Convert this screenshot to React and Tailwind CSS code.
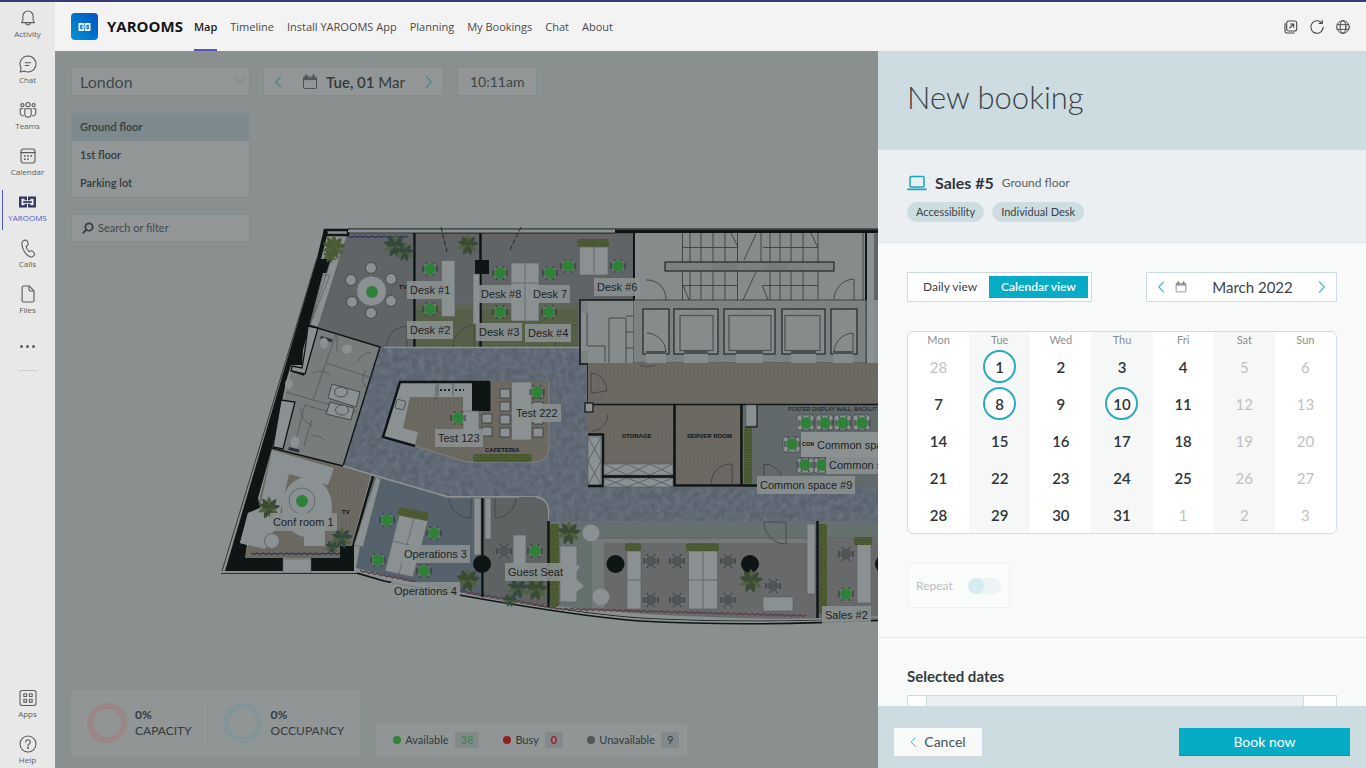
import React from "react";

const GREEN = "#2f8039";
const GREY = "#505456";
const WHITE = "#8b9092";
const INK = "#0f1415";

/* ---------- icons ---------- */

function Icon({ children, className = "size-5", vb = "0 0 20 20", sw = 1.1 }) {
  return (
    <svg viewBox={vb} className={className} fill="none" stroke="currentColor" strokeWidth={sw} strokeLinecap="round" strokeLinejoin="round" aria-hidden="true">
      {children}
    </svg>
  );
}

const BellIcon = () => (
  <Icon>
    <path d="M3.6 14.6h12.8l-1.3-3V8.1a5.1 5.1 0 0 0-10.2 0v3.5z" />
    <path d="M7.8 14.8a2.2 2.2 0 0 0 4.4 0" />
  </Icon>
);
const ChatIcon = () => (
  <Icon>
    <path d="M10 2a8 8 0 1 1-3.7 15.1L2.2 18l.9-4A8 8 0 0 1 10 2z" />
    <path d="M7.3 8.7h5.4M7.3 11.5h3.4" />
  </Icon>
);
const TeamsIcon = () => (
  <Icon>
    <circle cx="10" cy="4.6" r="2.1" />
    <circle cx="4.4" cy="5.2" r="1.6" />
    <circle cx="15.6" cy="5.2" r="1.6" />
    <path d="M6.8 8.7h6.4v5.2a3.2 3.2 0 0 1-6.4 0z" />
    <path d="M4.9 8.7H2.2v4.4a2.8 2.8 0 0 0 3.2 2.7M15.1 8.7h2.7v4.4a2.8 2.8 0 0 1-3.2 2.7" />
  </Icon>
);
const CalendarIcon = () => (
  <Icon>
    <rect x="3" y="3" width="14" height="14" rx="2.4" />
    <path d="M3 6.6h14" />
    <g fill="currentColor" stroke="none">
      <circle cx="10" cy="10" r=".9" />
      <circle cx="13.2" cy="10" r=".9" />
      <circle cx="6.9" cy="10" r=".9" />
      <circle cx="6.9" cy="13.2" r=".9" />
      <circle cx="10" cy="13.2" r=".9" />
    </g>
  </Icon>
);
const LinkMark = ({ className }) => (
  <svg viewBox="0 0 18 12" className={className} fill="none" stroke="currentColor" aria-hidden="true">
    <path strokeWidth="2.5" d="M7.200 4.200V1.300H1.300v9.400h5.900V7.800M10.800 4.200V1.300h5.900v9.400h-5.900V7.800" />
    <path strokeWidth="1.800" d="M4.400 6h9.200" />
  </svg>
);
const PhoneIcon = () => (
  <Icon>
    <path d="M5.9 2.5l1.5-.4c.8-.2 1.500.2 1.800.9l.9 2.100c.3.700.1 1.500-.4 2L8.200 8.500c.2 1.700 1.300 3.700 2.900 5l1.900-.6c.7-.2 1.400 0 1.900.6l1.300 1.800c.4.600.4 1.400-.1 2l-.9.900c-.9.900-2.200 1.100-3.200.6C7.300 16.600 4.200 10.900 3.900 6c-.1-1.600.700-3.100 2-3.500z" />
  </Icon>
);
const FileIcon = () => (
  <Icon>
    <path d="M5.600 2h5.600l4.800 4.800v9.700a1.500 1.500 0 0 1-1.500 1.500H5.600a1.500 1.500 0 0 1-1.500-1.500v-13A1.500 1.500 0 0 1 5.600 2z" />
    <path d="M11 2.200v3.600A1.200 1.200 0 0 0 12.200 7h3.600" />
  </Icon>
);
const AppsIcon = () => (
  <Icon>
    <rect x="2" y="2.500" width="16" height="15" rx="2.200" />
    <rect x="5.800" y="5.700" width="2.800" height="2.800" />
    <rect x="11.400" y="5.700" width="2.800" height="2.800" />
    <rect x="5.800" y="11.300" width="2.800" height="2.800" />
    <rect x="11.400" y="11.300" width="2.800" height="2.800" />
  </Icon>
);
const HelpIcon = () => (
  <Icon>
    <circle cx="10" cy="10" r="8" />
    <path d="M7.700 8a2.300 2.300 0 1 1 3.500 2c-.8.500-1.200 1-1.200 1.900" />
    <circle cx="10" cy="14" r=".5" fill="currentColor" />
  </Icon>
);
const Left = ({ className }) => (
  <Icon vb="0 0 8 14" className={className} sw={1.4}><path d="M7 1L1.500 7 7 13" /></Icon>
);
const Right = ({ className }) => (
  <Icon vb="0 0 8 14" className={className} sw={1.4}><path d="M1 1l5.500 6L1 13" /></Icon>
);
const DateIcon = ({ className }) => (
  <Icon vb="0 0 16 16" className={className} sw={1}>
    <rect x="1.500" y="3" width="13" height="11.500" rx="1" />
    <path d="M1.500 5.600h13M2 4.400h12" />
    <path d="M4.500 1.200v2.600M11.500 1.200v2.600" strokeWidth="2" />
  </Icon>
);

/* ---------- app rail ---------- */

const RAIL = [
  ["Activity", BellIcon],
  ["Chat", ChatIcon],
  ["Teams", TeamsIcon],
  ["Calendar", CalendarIcon],
  ["YAROOMS", () => <LinkMark className="h-5 w-[17px] py-1" />],
  ["Calls", PhoneIcon],
  ["Files", FileIcon],
];

function RailItem({ label, Glyph, active, pad = "pt-1.5" }) {
  return (
    <a
      href="#"
      className={
        "relative flex h-[46px] flex-col items-center text-[8px] leading-3 " + pad + " " +
        (active ? "text-[#5558c0]" : "text-[#5c5c5c]")
      }
    >
      {active && <span className="absolute left-0.5 top-1 h-10 w-px bg-[#5558c0]" />}
      <span className={active ? "text-[#33345f]" : ""}><Glyph /></span>
      <span>{label}</span>
    </a>
  );
}

function Rail() {
  return (
    <nav aria-label="Apps" className="flex w-[55px] shrink-0 flex-col bg-[#e8e8e8]">
      {RAIL.map(([label, Glyph]) => (
        <RailItem key={label} label={label} Glyph={Glyph} active={label === "YAROOMS"} />
      ))}
      <button type="button" aria-label="More apps" className="mx-auto mt-3.5 flex h-4 items-center gap-[3px] text-[#5c5c5c]">
        <i className="size-[3px] rounded-full bg-current" />
        <i className="size-[3px] rounded-full bg-current" />
        <i className="size-[3px] rounded-full bg-current" />
      </button>
      <div className="mx-auto mt-4 w-5 border-t border-[#cfcfcf]" />
      <div className="mt-auto">
        <RailItem label="Apps" Glyph={AppsIcon} pad="pt-3" />
        <RailItem label="Help" Glyph={HelpIcon} pad="pt-3" />
      </div>
    </nav>
  );
}

/* ---------- header ---------- */

const TABS = ["Map", "Timeline", "Install YAROOMS App", "Planning", "My Bookings", "Chat", "About"];

function Header() {
  return (
    <header className="flex h-[49px] shrink-0 items-center bg-[#f3f3f3] pl-4 pr-[15px]">
      <div className="flex size-[27px] items-center justify-center rounded bg-linear-to-tr from-[#0a93cf] to-[#0b4fc4] text-white">
        <LinkMark className="h-2 w-[13px]" />
      </div>
      <h1 className="ml-[9px] text-[15px] font-bold text-[#161616]">YAROOMS</h1>
      <nav aria-label="Sections" className="ml-[11px] flex h-full gap-[13px] text-[11px] text-[#4a4a4a]">
        {TABS.map((t) => (
          <a
            key={t}
            href="#"
            className={
              "flex h-full items-center border-b-2 pt-1 " +
              (t === "Map" ? "border-[#5558b5] font-semibold text-[#1d1d1d]" : "border-transparent")
            }
          >
            {t}
          </a>
        ))}
      </nav>
      <div className="ml-auto flex gap-2.5 text-[#484848]">
        <button type="button" aria-label="Open in a new window">
          <Icon className="size-4" vb="0 0 16 16">
            <rect x="3.700" y="2" width="10" height="10" rx="2" />
            <path d="M2 4.500v7.300A2.200 2.200 0 0 0 4.200 14h7M6.700 9l4-4M7.500 5h3.200v3.200" />
          </Icon>
        </button>
        <button type="button" aria-label="Refresh">
          <Icon className="size-4" vb="0 0 16 16">
            <path d="M14.200 8A6.200 6.200 0 1 1 11.500 2.900l1.600 1.300M13.300 1.200v3.200h-3.100" />
          </Icon>
        </button>
        <button type="button" aria-label="Language">
          <Icon className="size-4" vb="0 0 16 16" sw={1}>
            <circle cx="8" cy="8" r="6.300" />
            <ellipse cx="8" cy="8" rx="2.900" ry="6.300" />
            <path d="M2.300 5.700h11.400M2.300 10.300h11.400" />
          </Icon>
        </button>
      </div>
    </header>
  );
}

/* ---------- floor plan ---------- */

const Seat = ({ x, y, c = GREEN }) => (
  <g>
    <rect x={x - 5.5} y={y - 5.5} width="11" height="11" rx="3" fill="#7c8182" />
    <path d={`M${x - 7} ${y - 3}v6M${x + 7} ${y - 3}v6M${x - 4} ${y - 7}l1 2M${x + 4} ${y - 7}l-1 2M${x - 4} ${y + 7}l1-2M${x + 4} ${y + 7}l-1-2`} stroke="#2c3233" strokeWidth="1" />
    <circle cx={x} cy={y} r="5.800" fill={c} />
  </g>
);

const Plant = ({ x, y, s = 1, c = "#3a4a35" }) => (
  <g transform={`translate(${x} ${y}) scale(${s})`}>
    {[0, 40, 80, 125, 165, 205, 250, 290, 325].map((a, i) => (
      <path key={a} transform={`rotate(${a})`} d="M0 0C-3-3-3.500-8 0-12C3.500-8 3-3 0 0z" fill={i % 3 ? c : "#50603f"} />
    ))}
  </g>
);

const Box = ({ x, y, w, h, f = WHITE }) => (
  <rect x={x} y={y} width={w} height={h} fill={f} stroke="#595e60" strokeWidth=".6" />
);

const Hedge = ({ x, y, w, h }) => <rect x={x} y={y} width={w} height={h} rx="2" fill="url(#hedge)" />;

const Stool = ({ x, y }) => (
  <g>
    <circle cx={x} cy={y} r="6" fill="#4a4f50" />
    <circle cx={x} cy={y} r="5" fill={WHITE} />
  </g>
);

const GREEN_SEATS = [
  [430, 269], [430, 309], [500, 273], [500, 312], [550, 273], [549, 312], [568, 266], [618, 266],
  [537, 392], [458, 418], [387, 520], [434, 533], [378, 560], [424, 571], [535, 551],
  [806, 423], [825, 423], [843, 423], [862, 423], [792, 444], [805, 465], [822, 465], [846, 594],
];
const GREY_SEATS = [
  [504, 551], [651, 561], [651, 600], [677, 561], [677, 600], [728, 561], [728, 600], [773, 586], [846, 554],
];

function zigzag(x1, y1, x2, y2) {
  const n = Math.round(Math.hypot(x2 - x1, y2 - y1) / 3);
  let d = `M${x1} ${y1}`;
  for (let i = 1; i <= n; i++) {
    d += `L${(x1 + ((x2 - x1) * i) / n).toFixed(1)} ${(y1 + ((y2 - y1) * i) / n + (i % 2 ? 1.6 : 0)).toFixed(1)}`;
  }
  return d;
}

function FloorDrawing() {
  return (
    <svg viewBox="215 220 670 410" className="h-[410px] w-[670px]" aria-hidden="true">
      <defs>
        <pattern id="hedge" width="5" height="5" patternUnits="userSpaceOnUse">
          <rect width="5" height="5" fill="#44522d" />
          <path d="M0 1l2 1M3 0l1 2M1 4l2-1M4 3l1 2" stroke="#5c6b3c" strokeWidth="1" />
        </pattern>
        <pattern id="hatch" width="3" height="3" patternUnits="userSpaceOnUse">
          <rect width="3" height="3" fill="#848989" />
          <path d="M0 3L3 0" stroke="#54595a" strokeWidth=".5" />
        </pattern>
        <pattern id="wood" width="8" height="30" patternUnits="userSpaceOnUse">
          <rect width="8" height="30" fill="#6c6862" />
          <path d="M2 0v18M6 9v21" stroke="#67635d" strokeWidth="1" />
        </pattern>
        <filter id="grain" x="0" y="0" width="100%" height="100%" colorInterpolationFilters="sRGB">
          <feTurbulence type="fractalNoise" baseFrequency=".16" numOctaves="3" seed="4" />
          <feColorMatrix values="0 0 0 0 .5  0 0 0 0 .54  0 0 0 0 .6  .8 0 0 0 -.22" />
          <feComposite in2="SourceGraphic" operator="in" result="n" />
          <feMerge><feMergeNode in="SourceGraphic" /><feMergeNode in="n" /></feMerge>
        </filter>
      </defs>

      {/* floors */}
      <g filter="url(#grain)">
        <path d="M380 347H588V487H885V521H549V510Q547 496 535 496H448L343 466z" fill="#59626d" />
      </g>
      <path d="M347 234H414V347H380L318 327z" fill="#606467" />
      <path d="M416 233H634V300H580V347H416z" fill="#606467" />
      <path d="M416 303H578V347H416z" fill="#566048" />
      <path d="M416 303H578V310H416z" fill="#5d6556" />
      <path d="M318 327L380 347 343 466 272 448 291 372H305z" fill="#787c7d" />
      <path d="M343 466L371 475 348 558H245L272 448z" fill="url(#wood)" />
      <path d="M373 476L448 497H482V597L420 584 356 568z" fill="#56626b" />
      <path d="M484 497H535Q548 498 548 510V606L484 597z" fill="#5e6263" />
      <path d="M549 521H885V616Q800 620 740 618Q640 616 549 605z" fill="#67696a" />
      <path d="M549 521H817V537H549zM819 521H885V537H819z" fill="#64716f" />
      <path d="M560 537H592V610L560 606z" fill="#64716f" />
      <path d="M592 539H817V543H604V608H592z" fill="#74797a" />

      {/* outer shell */}
      <path d="M325 230H348V235H325z" fill={WHITE} stroke={INK} strokeWidth="2.500" />
      <path d="M348 229H878M348 233H615" stroke={INK} strokeWidth="1.200" />
      <path d="M348 231H615" stroke={WHITE} strokeWidth="2.500" />
      <path d="M615 231.500H885" stroke={INK} strokeWidth="3.500" />
      <path d="M324 229L328 232 321 259H332L330 273H323L303 350 302 365H291L287 378 272 448 258 498 260 508 248 513 240 543 247 545 245 558H283V571H225L317 258z" fill={INK} />
      <path d="M317 258L222 571" stroke="#33393a" strokeWidth="1" />
      <path d="M311 558H340V546H354V571H311z" fill={INK} />
      <Box x={283} y={559} w={28} h={14} />
      <path d="M221 573.500H357L384 581Q560 612 640 618Q750 624 885 618" fill="none" stroke="#2a3031" strokeWidth="1" />
      <path d="M356 570L386 580Q560 614 640 620Q750 626 885 619" fill="none" stroke={WHITE} strokeWidth="2" />
      <path d="M357 573L384 581Q560 615 640 621Q750 627 885 620" fill="none" stroke={INK} strokeWidth="1.600" />
      <path d={zigzag(348, 236, 408, 236)} fill="none" stroke="#2c375a" strokeWidth="1.300" />
      <path d={zigzag(251, 553, 340, 553)} fill="none" stroke="#2c375a" strokeWidth="1.300" />
      <path d={zigzag(752, 480, 878, 480)} fill="none" stroke="#2c375a" strokeWidth="1.300" />
      <path d={zigzag(360, 570, 416, 581)} fill="none" stroke="#583e4b" strokeWidth="1.300" />
      <path d={zigzag(460, 590, 560, 608)} fill="none" stroke="#583e4b" strokeWidth="1.300" />
      <path d={zigzag(560, 608, 806, 615)} fill="none" stroke="#583e4b" strokeWidth="1.300" />
      <path d={zigzag(416, 236, 615, 236)} fill="none" stroke="#7d5c56" strokeWidth=".8" />

      {/* left side furniture */}
      <path d="M338 259L331 259 310 325 318 327 344 245z M323 275L330 275 310 325z" fill={WHITE} stroke="#4d5253" strokeWidth=".6" />
      <path d="M308 326L318 328 305 374 291 371 292 366 302 368 305 350z" fill={WHITE} stroke={INK} strokeWidth="1.300" />
      <path d="M281 400L295 402 283 449 273 447z" fill={WHITE} stroke={INK} strokeWidth="1.300" />
      <path d="M272 450L334 468 328 485 289 474 280 514 270 540 265 549 240 543 248 513 260 508z" fill={WHITE} />
      <ellipse cx="307" cy="507" rx="25" ry="30" fill={WHITE} />
      <rect x="304" y="525" width="21" height="21" fill={WHITE} />
      <circle cx="302" cy="501" r="13" fill="none" stroke="#5b6061" strokeWidth=".8" />
      <circle cx="272" cy="541" r="7.500" fill={WHITE} stroke="#5b6061" strokeWidth=".8" />
      <path d="M308 325L380 347 343 466M304 375L292 371M272 448L343 466" fill="none" stroke={INK} strokeWidth="1.400" />
      <path d="M373 476L353 546" stroke={INK} strokeWidth="2.500" />
      <path d="M376 477L381 479 363 547 354 545z" fill={WHITE} stroke="#595e60" strokeWidth=".6" />
      <path d="M336 334L313 400 286 392M326 363L372 378M313 400L357 412M296 440L305 405 349 418M337 334V352M330 375A14 14 0 0 0 313 373M371 353A12 12 0 0 0 358 362M366 370A14 14 0 0 0 366 388M301 408A15 15 0 0 0 312 425M311 436A14 14 0 0 1 325 441M304 446L312 420" fill="none" stroke="#4a5051" strokeWidth=".7" />
      <path d="M332 384L360 392 356 407 328 398z M330 402L354 408 351 420 326 414z" fill={WHITE} stroke="#33393a" strokeWidth=".8" />
      <ellipse cx="341" cy="392" rx="6.500" ry="5" fill={WHITE} stroke="#3c4243" strokeWidth=".8" />
      <ellipse cx="342" cy="410" rx="6.500" ry="5" fill={WHITE} stroke="#3c4243" strokeWidth=".8" />
      <rect x="321" y="336" width="12" height="3" fill="#2b3132" transform="rotate(16 321 336)" />
      <rect x="289" y="447" width="11" height="3" fill="#2b3132" transform="rotate(14 289 447)" />
      <ellipse cx="324" cy="343" rx="4" ry="5.500" fill={WHITE} />
      <ellipse cx="347" cy="349" rx="5" ry="4.500" fill={WHITE} />
      <ellipse cx="295" cy="442" rx="4.500" ry="6" fill={WHITE} />
      <ellipse cx="289" cy="384" rx="4" ry="5" fill={WHITE} />

      {/* round meeting table */}
      {[[371, 268], [351, 280], [391, 279], [352, 302], [391, 301], [371, 313]].map(([x, y]) => (
        <Stool key={`${x}-${y}`} x={x} y={y} />
      ))}
      <circle cx="371.500" cy="291" r="15" fill={WHITE} stroke="#5b6061" strokeWidth=".8" />
      <circle cx="372" cy="292" r="6" fill={GREEN} />
      <circle cx="302" cy="501" r="6" fill={GREEN} />

      {/* upper desks */}
      <path d="M414.500 233V347" stroke={INK} strokeWidth="2.500" />
      <path d="M480.500 233V347" stroke={INK} strokeWidth="2.500" />
      <rect x="475" y="260" width="14" height="14" fill={INK} />
      <path d="M384 347.500H580" stroke={WHITE} strokeWidth="1.500" />
      <path d="M386 347A22 22 0 0 1 407 326V347M453 347A22 22 0 0 1 474 325V347M555 347A22 22 0 0 1 577 325" fill="none" stroke="#3c4243" strokeWidth=".8" />
      <Box x={441.500} y={260.500} w={13.500} h={56} />
      <Box x={473} y={274} w={6.500} h={50} />
      <Box x={511} y={263} w={28} h={58} />
      <path d="M525 263V321M511 283H539" stroke="#5b6061" strokeWidth=".7" />
      <Hedge x={577} y={239} w={32} h={8} />
      <Box x={579.500} y={247} w={28.500} h={28} />
      <path d="M594 247V275" stroke="#5b6061" strokeWidth=".7" />
      <path d="M441 227L447 252M521 227L510 250M443 228" stroke="#22282a" strokeWidth="1" strokeDasharray="5 2" />
      <path d="M634 233V300" stroke={INK} strokeWidth="2" />

      {/* stairs and lifts */}
      <rect x="636" y="233" width="238" height="67" fill="#868b8c" />
      <g stroke="#3b4142" strokeWidth=".9" fill="none">
        <path d="M682.500 233V300M690 233V300M701 233V300M713 233V300M725 233V300M737.500 233V300M761 233V262M770 233V300M780 233V300M791 233V300M803 233V300M818 233V300" />
        <path d="M682 247.500H738M763 247.500H818M682 285.500H738M763 285.500H818M756 234L744 260M756 272L743 300M731 233L738 247M811 233L818 248M683 285L689 300M762 285L768 300" />
        <path d="M646 280A19 19 0 0 1 666 299V300M854 279A21 21 0 0 0 834 299M854 279V300M863 233V300" />
      </g>
      <rect x="665" y="262" width="169" height="9" fill="url(#hatch)" stroke={INK} strokeWidth="1" />
      <rect x="712" y="263" width="25" height="7" fill="#777c7d" />
      <rect x="764" y="263" width="24" height="7" fill="#777c7d" />
      <path d="M866 233V300" stroke={INK} strokeWidth="2" />
      <path d="M866 300V363" stroke="#3b4142" strokeWidth="1" />
      <rect x="867" y="234" width="7" height="129" fill={WHITE} />
      <rect x="874" y="234" width="11" height="66" fill="#606467" />
      <rect x="874" y="300" width="11" height="63" fill="#868b8c" />
      <rect x="633" y="300" width="233" height="63" fill="url(#hatch)" stroke="#2f3536" strokeWidth=".8" />
      {[[643, 26], [674, 44], [724, 51], [782, 43], [831, 26]].map(([x, w]) => (
        <rect key={x} x={x} y="309" width={w} height="45" fill="#868b8c" stroke="#22282a" strokeWidth="1.200" />
      ))}
      {[[680, 33], [729, 42], [785, 35]].map(([x, w]) => (
        <rect key={x} x={x} y="315.500" width={w} height="35" fill="none" stroke="#4b5152" strokeWidth="1.200" />
      ))}
      {[[684, 24], [736, 27], [791, 25], [646, 20], [833, 20]].map(([x, w]) => (
        <g key={x}>
          <rect x={x} y="354" width={w} height="9" fill="#868b8c" />
          <rect x={x} y="351" width={w} height="3" fill="#4b5152" />
        </g>
      ))}
      <path d="M647 333A20 20 0 0 1 666 352M853 333A20 20 0 0 0 834 352M853 333V352" fill="none" stroke="#3c4243" strokeWidth=".9" />
      <rect x="580" y="300" width="53" height="63" fill="#868b8c" />
      <path d="M634 300H580V364H588V404" fill="none" stroke={INK} strokeWidth="1.500" />
      <path d="M587 302V346M609 318H626V363M609 318V363M626 316H633M626 332H633M626 348H633M588 346H605V362" fill="none" stroke="#3c4243" strokeWidth=".9" />
      <rect x="581" y="301" width="7" height="12" fill="url(#hatch)" />
      <rect x="581" y="351" width="7" height="12" fill="url(#hatch)" />

      {/* wood hall, storage, server room */}
      <rect x="588" y="363" width="290" height="41" fill="url(#wood)" />
      <path d="M588 404H741V485H604V434H588z" fill="url(#wood)" />
      <rect x="743" y="404" width="142" height="83" fill="#62696b" />
      <path d="M589 404.500H885" stroke={INK} strokeWidth="1.600" />
      <rect x="585" y="403" width="8" height="9" fill={WHITE} stroke={INK} strokeWidth="1.200" />
      <path d="M591 373A18 18 0 0 1 607 391L591 393zM640 365A17 17 0 0 0 655 365M608 414A17 17 0 0 1 592 431" fill="none" stroke="#3c4243" strokeWidth=".8" />
      <Box x={588} y={437} w={13} h={48} />
      <path d="M588 437L601 461 588 485M601 437L588 461 601 485" fill="none" stroke="#4b5152" strokeWidth=".7" />
      <path d="M588 434.500H603V486H588" fill="none" stroke={INK} strokeWidth="2.500" />
      <Box x={604} y={464} w={69} h={11} />
      <Box x={604} y={478} w={69} h={9} />
      <path d="M604 464L627 475 650 464 673 475M604 475L627 464 650 475 673 464M604 478L627 487 650 478 673 487M604 487L627 478 650 487 673 478" fill="none" stroke="#4b5152" strokeWidth=".7" />
      <path d="M604 476.500H674" stroke={INK} strokeWidth="2.500" />
      <path d="M674.500 404V485.500H757M741.500 404V485" fill="none" stroke={INK} strokeWidth="2.600" />
      <path d="M711 484A20 20 0 0 1 732 464V484M764 464V478M764 464A18 18 0 0 1 782 478" fill="none" stroke="#3c4243" strokeWidth=".9" />
      <Hedge x={744} y={427} w={8} h={57} />
      <Box x={746} y={405} w={11} h={21} />
      <path d="M757 404V427H745" fill="none" stroke={INK} strokeWidth="1" />
      <rect x="801" y="432" width="84" height="25" fill={WHITE} />
      {[[797, 415], [816, 415], [834, 415], [853, 415], [783, 437], [797, 458], [814, 458]].map(([x, y]) => (
        <rect key={`${x}-${y}`} x={x} y={y} width="17" height="15" rx="2" fill={WHITE} stroke="#3c4243" strokeWidth=".7" />
      ))}

      {/* cafeteria */}
      <path d="M400 382H549V449Q547 462 535 462H466L383 437z" fill="url(#wood)" />
      <path d="M549 382V449Q547 462 535 462H466L415 446" fill="none" stroke="#7e8384" strokeWidth="1" />
      <path d="M400 383H473V440H463V397H410L403 428 418 432 415 445 384 437z" fill={WHITE} />
      <path d="M490 382H400L383 437 415 446" fill="none" stroke={INK} strokeWidth="2.500" />
      <rect x="472" y="382" width="18.500" height="29" fill={INK} />
      <path d="M438 383V396M453 383V396M436 385V400" stroke="#4b5152" strokeWidth=".8" />
      <path d="M440 390H451M455 390H464" stroke="#22282a" strokeWidth="2" strokeDasharray="2 2" />
      <rect x="396" y="400" width="9" height="9" rx="1" fill="none" stroke="#4b5152" strokeWidth=".9" transform="rotate(14 400 404)" />
      <Box x={463} y={411} w={16} h={29} />
      <Box x={511.500} y={382} w={20} h={58} />
      {[388, 401, 414, 427].map((y) => (
        <g key={y} fill={WHITE} stroke="#33393a" strokeWidth=".8">
          <path d={`M500 ${y + 1}h10v9h-10zM533 ${y + 1}h10v9h-10z`} />
          {y > 401 && <path d={`M482 ${y}h10v9h-10z`} />}
        </g>
      ))}
      <Hedge x={473} y={454} w={59} h={8} />

      {/* operations and guest seats */}
      <path d="M399 515L428 521 413 577 385 571z" fill={WHITE} stroke="#595e60" strokeWidth=".7" />
      <path d="M414 518L399 574M393 541L421 548" stroke="#5b6061" strokeWidth=".7" />
      <g transform="rotate(11 399 507)"><Hedge x={399} y={507} w={31} h={8} /></g>
      <path d="M449 497A21 21 0 0 0 471 518V497M495 518A21 21 0 0 0 516 498M495 497V518" fill="none" stroke="#3c4243" strokeWidth=".8" />
      <path d="M343 466L448 497H519M536 497Q549 499 549 513" fill="none" stroke={WHITE} strokeWidth="1.400" />
      <Box x={474} y={498} w={7} h={57} />
      <Box x={485} y={498} w={6} h={41} />
      <path d="M482.500 498V597" stroke={INK} strokeWidth="2.500" />
      <circle cx="482" cy="564" r="9" fill={INK} />
      <Box x={513} y={535} w={13} h={30} />

      {/* lounge and sales */}
      <path d="M548.500 521V607" stroke={INK} strokeWidth="2.500" />
      <Hedge x={550} y={524} w={9} h={83} />
      <Box x={560} y={546} w={17} h={56} />
      <path d="M565 562L580 566 575 574 565 572zM569 585L576 579 584 586 574 594z" fill={WHITE} />
      <circle cx="591" cy="533" r="8.500" fill={WHITE} />
      <circle cx="601" cy="597" r="8.500" fill={WHITE} />
      <circle cx="615.500" cy="564" r="9" fill={INK} />
      <circle cx="750" cy="564" r="9" fill={INK} />
      <Box x={627} y={551} w={14} h={58} />
      <Hedge x={625} y={543} w={16} h={8} />
      <Box x={688.500} y={551} w={29} h={58} />
      <path d="M703 551V609M688 580H718M627 580H641" stroke="#5b6061" strokeWidth=".8" />
      <Hedge x={686} y={543} w={33} h={8} />
      <Box x={763} y={597} w={30} h={14} />
      <Box x={807} y={524} w={8} h={70} />
      <path d="M764 522H786V544A22 22 0 0 1 764 522" fill="none" stroke="#3c4243" strokeWidth=".8" />
      <path d="M817.500 521V618" stroke={INK} strokeWidth="2.500" />
      <Hedge x={819} y={524} w={8} h={90} />
      <Box x={857} y={543} w={14} h={60} />
      <Hedge x={854} y={537} w={18} h={8} />
      <circle cx="884" cy="564" r="9" fill={INK} />

      {/* plants */}
      <Plant x={334} y={247} c="#4a5a34" />
      <Plant x={330} y={256} s={0.6} c="#4a5a34" />
      <Plant x={395} y={246} c="#33483f" />
      <Plant x={405} y={252} s={0.8} c="#33483f" />
      <Plant x={468} y={245} s={0.9} />
      <Plant x={269} y={508} s={0.95} />
      <Plant x={342} y={538} s={0.9} c="#33483f" />
      <Plant x={332} y={547} s={0.6} c="#33483f" />
      <Plant x={468} y={580} />
      <Plant x={569} y={533} />
      <Plant x={751} y={581} />
      <Plant x={536} y={589} />
      <Plant x={518} y={588} s={0.9} c="#33483f" />
      <Plant x={510} y={600} s={0.6} c="#33483f" />

      {GREY_SEATS.map(([x, y]) => <Seat key={`${x}-${y}`} x={x} y={y} c={GREY} />)}
      {GREEN_SEATS.map(([x, y]) => <Seat key={`${x}-${y}`} x={x} y={y} />)}

      <g fill={INK} fontFamily="Liberation Sans, sans-serif" fontSize="6" fontWeight="700">
        <text x="485" y="452">CAFETERIA</text>
        <text x="622" y="438">STORAGE</text>
        <text x="687" y="438">SERVER ROOM</text>
        <text x="802" y="446" fontSize="5.500">CON</text>
        <text x="399" y="289">TV</text>
        <text x="342" y="514">TV</text>
        <text x="788" y="411" fontSize="5.500" fontWeight="400">POSTER DISPLAY WALL, BACKLIT</text>
      </g>
    </svg>
  );
}

const LABELS = [
  ["Desk #1", 407, 281], ["Desk #2", 407, 321], ["Desk #8", 478, 285], ["Desk 7", 530, 285],
  ["Desk #3", 476, 323], ["Desk #4", 525, 324], ["Desk #6", 594, 278], ["Test 222", 513, 404],
  ["Test 123", 435, 429], ["Conf room 1", 270, 513], ["Operations 3", 401, 545], ["Operations 4", 391, 582],
  ["Guest Seat", 505, 563], ["Common space", 814, 436], ["Common space", 826, 456],
  ["Common space #9", 757, 476], ["Sales #2", 822, 606],
];

function FloorPlan() {
  return (
    <div className="absolute left-[160px] top-[169px]">
      <FloorDrawing />
      {LABELS.map(([text, x, y]) => (
        <button
          key={`${x}-${y}`}
          type="button"
          className="absolute whitespace-nowrap bg-[#8b9090]/90 px-[3px] font-['Liberation_Sans',sans-serif] text-[11px] leading-[18px] text-[#1d2325]"
          style={{ left: x - 215, top: y - 220 }}
        >
          {text}
        </button>
      ))}
    </div>
  );
}

/* ---------- map page ---------- */

const PANEL = "border border-[#7f8c90] bg-[#929696]";

function Filters() {
  return (
    <div className="relative flex flex-col items-start gap-4 text-[#343c40]">
      <div className="flex gap-[13px]">
        <div className="relative">
          <select aria-label="Location" defaultValue="London" className={PANEL + " h-[29px] w-[179px] appearance-none px-2 text-base leading-4 text-[#40484c]"}>
            <option>London</option>
          </select>
          <Icon vb="0 0 14 8" className="absolute right-1 top-2.5 h-2 w-3 text-[#5f858c]"><path d="M1 1l6 6 6-6" /></Icon>
        </div>
        <div className={PANEL + " flex h-[29px] w-[181px] items-center justify-between px-2.5"}>
          <button type="button" aria-label="Previous day" className="text-[#4f848c]"><Left className="h-3 w-2" /></button>
          <button type="button" className="flex items-center gap-2 text-[15px] leading-5">
            <DateIcon className="size-4 text-[#4b5356]" />
            <span><b className="font-semibold">Tue, 01</b> Mar</span>
          </button>
          <button type="button" aria-label="Next day" className="text-[#4f848c]"><Right className="h-3 w-2" /></button>
        </div>
        <button type="button" className={PANEL + " h-[29px] px-3 text-sm leading-5 text-[#3c4448]"}>10:11am</button>
      </div>
      <ul className={PANEL + " w-[179px] text-[11px] font-semibold"}>
        {["Ground floor", "1st floor", "Parking lot"].map((f, i) => (
          <li key={f}>
            <button type="button" className={"block h-7 w-full px-2 text-left " + (i === 0 ? "bg-[#7d898d]" : "")}>{f}</button>
          </li>
        ))}
      </ul>
      <label className={PANEL + " flex h-[28px] w-[179px] items-center gap-1 px-2.5"}>
        <Icon vb="0 0 14 14" className="size-3 shrink-0" sw={2}><circle cx="8.200" cy="5.800" r="4.300" /><path d="M5 9l-3.600 3.600" /></Icon>
        <input type="text" aria-label="Search or filter" placeholder="Search or filter" className="w-full bg-transparent text-[11px] placeholder:text-[#42494c]" />
      </label>
    </div>
  );
}

function Gauge({ label, ring }) {
  return (
    <div className="flex items-center gap-2">
      <svg viewBox="0 0 40 40" className="size-10" aria-hidden="true"><circle cx="20" cy="20" r="17" fill="none" stroke={ring} strokeWidth="6" /></svg>
      <p className="text-xs leading-4"><b className="block font-bold">0%</b>{label}</p>
    </div>
  );
}

function Legend({ label, n, dot, tone }) {
  return (
    <p className="flex items-center gap-1">
      <i className={"size-2 rounded-full " + dot} />
      {label}
      <span className={"ml-0.5 bg-[#848a8b] px-1.5 leading-4 " + tone}>{n}</span>
    </p>
  );
}

function MapPage() {
  return (
    <main className="relative flex min-w-0 flex-1 flex-col justify-between overflow-hidden bg-[#8a9090] px-4 pb-3 pt-4 font-['Lato',sans-serif]">
      <FloorPlan />
      <Filters />
      <div className="relative flex items-end gap-4 text-[#303b42]">
        <div className="flex h-[66px] items-center bg-[#919595] px-4">
          <Gauge label="CAPACITY" ring="#9b8688" />
          <span className="mx-[15px] h-10 border-l border-[#889093]" />
          <Gauge label="OCCUPANCY" ring="#829598" />
        </div>
        <div className="flex h-8 items-center gap-6 bg-[#919595] pl-[17px] pr-2 text-[11px]">
          <Legend label="Available" n="38" dot="bg-[#318438]" tone="text-[#3a8840]" />
          <Legend label="Busy" n="0" dot="bg-[#931f1d]" tone="text-[#9c2422] font-bold" />
          <Legend label="Unavailable" n="9" dot="bg-[#50585b]" tone="" />
        </div>
      </div>
    </main>
  );
}

/* ---------- booking drawer ---------- */

const WEEKS = [
  [28, 1, 2, 3, 4, 5, 6],
  [7, 8, 9, 10, 11, 12, 13],
  [14, 15, 16, 17, 18, 19, 20],
  [21, 22, 23, 24, 25, 26, 27],
  [28, 29, 30, 31, 1, 2, 3],
];
const DAYS = ["Mon", "Tue", "Wed", "Thu", "Fri", "Sat", "Sun"];

function dayTone(w, d) {
  const off = d > 4 || (w === 0 && d === 0) || (w === 4 && d > 3);
  return off ? "text-[#bfc1c2] " : "font-semibold text-[#2f3437] ";
}
const picked = (w, d) => (w < 2 && d === 1) || (w === 1 && d === 3);

function Calendar() {
  return (
    <div className="overflow-hidden rounded-md border border-[#d3dee2] bg-white">
      <table className="w-full table-fixed border-collapse text-center">
        <thead>
          <tr className="h-4 text-[11px] leading-4 text-[#8b8f91]">
            {DAYS.map((d, i) => <th key={d} className={"p-0 font-normal " + (i % 2 ? "bg-[#f6f8f8]" : "")}>{d}</th>)}
          </tr>
        </thead>
        <tbody>
          {WEEKS.map((row, w) => (
            <tr key={w} className="h-[37px]">
              {row.map((n, d) => (
                <td key={d} className={"p-0 align-middle " + (d % 2 ? "bg-[#f6f8f8]" : "")}>
                  <button
                    type="button"
                    aria-pressed={picked(w, d)}
                    className={
                      "mx-auto flex size-[33px] items-center justify-center rounded-full border-2 text-[15px] leading-5 " +
                      dayTone(w, d) +
                      (picked(w, d) ? "border-[#2aaabf] bg-white" : "border-transparent")
                    }
                  >
                    {n}
                  </button>
                </td>
              ))}
            </tr>
          ))}
        </tbody>
      </table>
    </div>
  );
}

function BookingDrawer() {
  return (
    <aside aria-label="New booking" className="flex w-[488px] shrink-0 flex-col bg-[#f8fafa] font-['Lato',sans-serif] text-[#3a4347]">
      <div className="flex h-[99px] shrink-0 items-center bg-[#ccdce1] px-[29px] pb-2">
        <h2 className="text-[31px] font-light leading-10">New booking</h2>
      </div>
      <div className="flex h-[93px] shrink-0 flex-col gap-2 border-b border-[#dde5e8] bg-[#ebeff2] px-[29px] pt-[22px]">
        <div className="flex items-center gap-2">
          <Icon vb="0 0 20 16" className="h-4 w-5 text-[#17a8c1]" sw={1.5}>
            <rect x="3" y="1.500" width="14" height="10.500" rx="1" />
            <path d="M.9 14.300h18.200" strokeWidth="1.800" />
          </Icon>
          <strong className="text-base leading-[22px] text-[#2f363a]">Sales #5</strong>
          <span className="text-xs text-[#596165]">Ground floor</span>
        </div>
        <div className="flex gap-2 text-[11px] leading-5">
          <span className="rounded-full bg-[#ccdce1] px-[9px]">Accessibility</span>
          <span className="rounded-full bg-[#ccdce1] px-[9px]">Individual Desk</span>
        </div>
      </div>

      <div className="min-h-0 flex-1 overflow-hidden">
        <div className="border-b border-[#dde5e8] px-[29px] pb-[29px] pt-[29px]">
          <div className="mb-[29px] flex h-[30px] justify-between">
            <div className="flex border border-[#ccdce1] bg-white p-[3px] text-xs">
              <button type="button" aria-pressed="false" className="px-3">Daily view</button>
              <button type="button" aria-pressed="true" className="bg-[#06acc6] px-3 font-semibold text-white">Calendar view</button>
            </div>
            <div className="flex w-[191px] items-center border border-[#ccdce1] bg-white px-2.5">
              <button type="button" aria-label="Previous month" className="text-[#43b9cc]"><Left className="h-3 w-2" /></button>
              <DateIcon className="ml-2.5 size-3 text-[#7b7478]" />
              <span className="flex-1 text-center text-[15px] leading-5">March 2022</span>
              <button type="button" aria-label="Next month" className="text-[#43b9cc]"><Right className="h-3 w-2" /></button>
            </div>
          </div>
          <Calendar />
          <label className="mt-[29px] flex h-[45px] w-[103px] items-center justify-between rounded border border-[#eff3f4] bg-[#fafbfb] px-2 text-xs text-[#bcc1c3]">
            Repeat
            <input
              type="checkbox"
              disabled
              className="h-4 w-[33px] appearance-none rounded-full bg-[#eef3f5] before:block before:size-4 before:rounded-full before:bg-[#d7ecf1]"
            />
          </label>
        </div>
        <section className="px-[29px] pt-7">
          <h3 className="text-[15px] font-bold leading-5 text-[#343c40]">Selected dates</h3>
          <div className="mt-[9px] flex h-10 border border-[#ccdce1] bg-[#ebeff2]">
            <div className="w-[19px] border-r border-[#ccdce1] bg-white" />
            <div className="flex-1" />
            <div className="w-[33px] border-l border-[#ccdce1] bg-white" />
          </div>
        </section>
      </div>

      <div className="relative flex h-[62px] shrink-0 items-start justify-between bg-[#ccdce1] px-4 pt-[22px]">
        <button type="button" className="flex h-7 w-[88px] items-center justify-center gap-2 bg-[#f8fafa] text-sm text-[#4a5458]">
          <Left className="h-2.5 w-1.5 text-[#43b9cc]" />
          Cancel
        </button>
        <button type="button" className="h-7 w-[171px] border-b border-[#0a93aa] bg-[#06acc6] text-sm text-white">Book now</button>
      </div>
    </aside>
  );
}

export default function App() {
  return (
    <div className="flex h-screen flex-col overflow-hidden border-t-2 border-[#3c3a76] font-['Open_Sans',sans-serif]">
      <div className="flex min-h-0 flex-1">
        <Rail />
        <div className="flex min-w-0 flex-1 flex-col">
          <Header />
          <div className="flex min-h-0 flex-1">
            <MapPage />
            <BookingDrawer />
          </div>
        </div>
      </div>
    </div>
  );
}
